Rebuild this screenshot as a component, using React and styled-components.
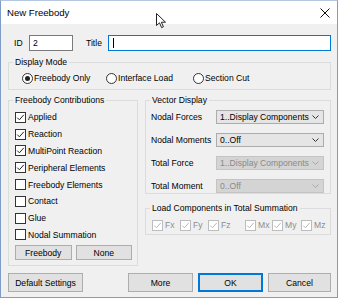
import React from 'react';
import styled, { createGlobalStyle } from 'styled-components';

const GlobalStyle = createGlobalStyle`
  html, body { margin: 0; padding: 0; background: #ffffff; }
  body {
    font-family: "Liberation Sans", Arial, sans-serif;
    font-size: 8.6px;
    color: #000;
  }
`;

const Window = styled.div`
  position: relative;
  width: 338px;
  height: 298px;
  box-sizing: border-box;
  border: 1px solid #7f9cc8;
  border-top-color: #b4c6e0;
  background: #f0f0f0;
  display: flex;
  flex-direction: column;
  overflow: hidden;
`;

const TitleBar = styled.div`
  height: 23px;
  background: #ffffff;
  display: flex;
  align-items: center;
  justify-content: space-between;
  padding: 0 7px 0 6px;
  font-size: 9.6px;
  color: #000;
`;

const Body = styled.div`
  flex: 1;
  display: flex;
  flex-direction: column;
  padding: 0 6px 0 7px;
`;

const IdRow = styled.div`
  margin-top: 11px;
  height: 16px;
  display: flex;
  align-items: center;
`;

const FieldLabel = styled.span`
  margin-left: ${p => p.$ml || 0}px;
  width: ${p => p.$w}px;
  line-height: 16px;
`;

const TextBox = styled.div`
  box-sizing: border-box;
  height: 16px;
  width: ${p => (p.$w ? `${p.$w}px` : 'auto')};
  flex: ${p => (p.$w ? 'none' : 1)};
  background: #fff;
  border: 1px solid ${p => (p.$focus ? '#0078d7' : '#7a7a7a')};
  padding-left: 3px;
  display: flex;
  align-items: center;
`;

const Caret = styled.span`
  width: 1px;
  height: 10px;
  margin-left: 1px;
  background: #000;
`;

const Group = styled.fieldset`
  margin: ${p => p.$mt || 0}px 0 0 0;
  padding: 0;
  min-width: 0;
  border: 1px solid #dcdcdc;
  box-sizing: border-box;
  width: ${p => (p.$w ? `${p.$w}px` : 'auto')};
`;

const Legend = styled.legend`
  margin-left: 4px;
  padding: 0 2px;
  line-height: 10px;
  font-size: 8.6px;
  color: ${p => (p.$disabled ? '#000' : '#000')};
`;

const RadioRow = styled.div`
  display: grid;
  grid-template-columns: 84px 87px auto;
  align-items: center;
  height: 12px;
  padding: 5px 0 5px 13px;
`;

const RadioItem = styled.label`
  display: flex;
  align-items: center;
  gap: 1px;
`;

const RadioCircle = styled.span`
  box-sizing: border-box;
  width: 11px;
  height: 11px;
  border-radius: 50%;
  border: 1px solid #333;
  background: #fff;
  display: flex;
  align-items: center;
  justify-content: center;
  &::after {
    content: '';
    width: 5px;
    height: 5px;
    border-radius: 50%;
    background: ${p => (p.$on ? '#222' : 'transparent')};
  }
`;

const Columns = styled.div`
  margin-top: 5px;
  display: flex;
  gap: 7px;
  align-items: flex-start;
`;

const RightColumn = styled.div`
  flex: 1;
  display: flex;
  flex-direction: column;
`;

const CheckList = styled.div`
  padding: 4px 0 0 6px;
  display: flex;
  flex-direction: column;
`;

const CheckRow = styled.label`
  height: 16.8px;
  display: flex;
  align-items: center;
  gap: 2px;
  color: ${p => (p.$disabled ? '#8d8d8d' : '#000')};
`;

const Box = styled.span`
  box-sizing: border-box;
  width: 11px;
  height: 11px;
  flex: none;
  border: 1px solid ${p => (p.$disabled ? '#bcbcbc' : '#333')};
  background: #fff;
  display: flex;
  align-items: center;
  justify-content: center;
`;

const SmallButtons = styled.div`
  display: grid;
  grid-template-columns: 1fr 1fr;
  gap: 4px;
  padding: 2px 5px 5px 6px;
`;

const Button = styled.div`
  box-sizing: border-box;
  height: ${p => p.$h || 19}px;
  width: ${p => (p.$w ? `${p.$w}px` : 'auto')};
  background: #e1e1e1;
  border: 1px solid ${p => (p.$default ? '#0078d7' : '#adadad')};
  box-shadow: ${p => (p.$default ? 'inset 0 0 0 1px #0078d7' : 'none')};
  display: flex;
  align-items: center;
  justify-content: center;
`;

const VectorRows = styled.div`
  display: flex;
  flex-direction: column;
  gap: 9px;
  padding: 5px 6px 0 5px;
  height: 88px;
  box-sizing: border-box;
`;

const VectorRow = styled.div`
  display: flex;
  align-items: center;
  height: 14px;
`;

const RowLabel = styled.span`
  width: 65px;
  flex: none;
`;

const Select = styled.div`
  box-sizing: border-box;
  flex: 1;
  height: 14px;
  background: ${p => (p.$disabled ? '#d4d4d4' : '#e5e5e5')};
  border: 1px solid ${p => (p.$disabled ? '#c4c4c4' : '#acacac')};
  color: ${p => (p.$disabled ? '#8a8a8a' : '#000')};
  display: flex;
  align-items: center;
  justify-content: space-between;
  padding: 0 4px 0 3px;
`;

const LoadRow = styled.div`
  display: grid;
  grid-template-columns: 28px 28px 37px 27px 29px auto;
  padding: 4px 0 6px 6px;
  height: 11px;
  align-items: center;
`;

const Footer = styled.div`
  margin-top: 7px;
  display: flex;
  align-items: center;
  gap: 5px;
`;

const Spacer = styled.div`
  flex: 1;
`;

const Cursor = styled.svg`
  position: absolute;
  left: 155px;
  top: 12px;
`;

function Check({ checked, disabled }) {
  return (
    <Box $disabled={disabled}>
      {checked && (
        <svg width="9" height="9" viewBox="0 0 9 9">
          <polyline
            points="1.2,4.6 3.4,6.8 7.8,1.8"
            fill="none"
            stroke={disabled ? '#b8b8b8' : '#222'}
            strokeWidth="1"
          />
        </svg>
      )}
    </Box>
  );
}

function Chevron({ disabled }) {
  return (
    <svg width="7" height="4" viewBox="0 0 7 4">
      <polyline points="0.5,0.5 3.5,3.5 6.5,0.5" fill="none" stroke={disabled ? '#a8a8a8' : '#333'} strokeWidth="1" />
    </svg>
  );
}

const contributions = [
  ['Applied', true],
  ['Reaction', true],
  ['MultiPoint Reaction', true],
  ['Peripheral Elements', true],
  ['Freebody Elements', false],
  ['Contact', false],
  ['Glue', false],
  ['Nodal Summation', false],
];

const vectors = [
  ['Nodal Forces', '1..Display Components', false],
  ['Nodal Moments', '0..Off', false],
  ['Total Force', '1..Display Components', true],
  ['Total Moment', '0..Off', true],
];

const loads = ['Fx', 'Fy', 'Fz', 'Mx', 'My', 'Mz'];

export default function App() {
  return (
    <>
      <GlobalStyle />
      <Window>
        <TitleBar>
          <span>New Freebody</span>
          <svg width="10" height="10" viewBox="0 0 10 10">
            <path d="M0.5 0.5 L9.5 9.5 M9.5 0.5 L0.5 9.5" stroke="#111" strokeWidth="1" />
          </svg>
        </TitleBar>
        <Body>
          <IdRow>
            <FieldLabel $ml={6} $w={15}>ID</FieldLabel>
            <TextBox $w={44}>2</TextBox>
            <FieldLabel $ml={13} $w={22}>Title</FieldLabel>
            <TextBox $focus>
              <Caret />
            </TextBox>
          </IdRow>

          <Group $mt={6}>
            <Legend>Display Mode</Legend>
            <RadioRow>
              <RadioItem><RadioCircle $on />Freebody Only</RadioItem>
              <RadioItem><RadioCircle />Interface Load</RadioItem>
              <RadioItem><RadioCircle />Section Cut</RadioItem>
            </RadioRow>
          </Group>

          <Columns>
            <Group $w={130}>
              <Legend>Freebody Contributions</Legend>
              <CheckList>
                {contributions.map(([name, on]) => (
                  <CheckRow key={name}>
                    <Check checked={on} />
                    {name}
                  </CheckRow>
                ))}
              </CheckList>
              <SmallButtons>
                <Button $h={15}>Freebody</Button>
                <Button $h={15}>None</Button>
              </SmallButtons>
            </Group>

            <RightColumn>
              <Group>
                <Legend>Vector Display</Legend>
                <VectorRows>
                  {vectors.map(([label, value, disabled]) => (
                    <VectorRow key={label}>
                      <RowLabel>{label}</RowLabel>
                      <Select $disabled={disabled}>
                        <span>{value}</span>
                        <Chevron disabled={disabled} />
                      </Select>
                    </VectorRow>
                  ))}
                </VectorRows>
              </Group>
              <Group $mt={9}>
                <Legend>Load Components in Total Summation</Legend>
                <LoadRow>
                  {loads.map(l => (
                    <CheckRow key={l} $disabled>
                      <Check checked disabled />
                      {l}
                    </CheckRow>
                  ))}
                </LoadRow>
              </Group>
            </RightColumn>
          </Columns>

          <Footer>
            <Button $w={75}>Default Settings</Button>
            <Spacer />
            <Button $w={65}>More</Button>
            <Button $w={65} $default>OK</Button>
            <Button $w={63}>Cancel</Button>
          </Footer>
        </Body>
        <Cursor width="12" height="16" viewBox="0 0 12 16">
          <path
            d="M0.5 0.5 L0.5 12.5 L3.5 9.8 L5.6 14.6 L7.4 13.8 L5.4 9.2 L9.5 9.2 Z"
            fill="#fff"
            stroke="#222"
            strokeWidth="1"
            strokeLinejoin="round"
          />
        </Cursor>
      </Window>
    </>
  );
}
